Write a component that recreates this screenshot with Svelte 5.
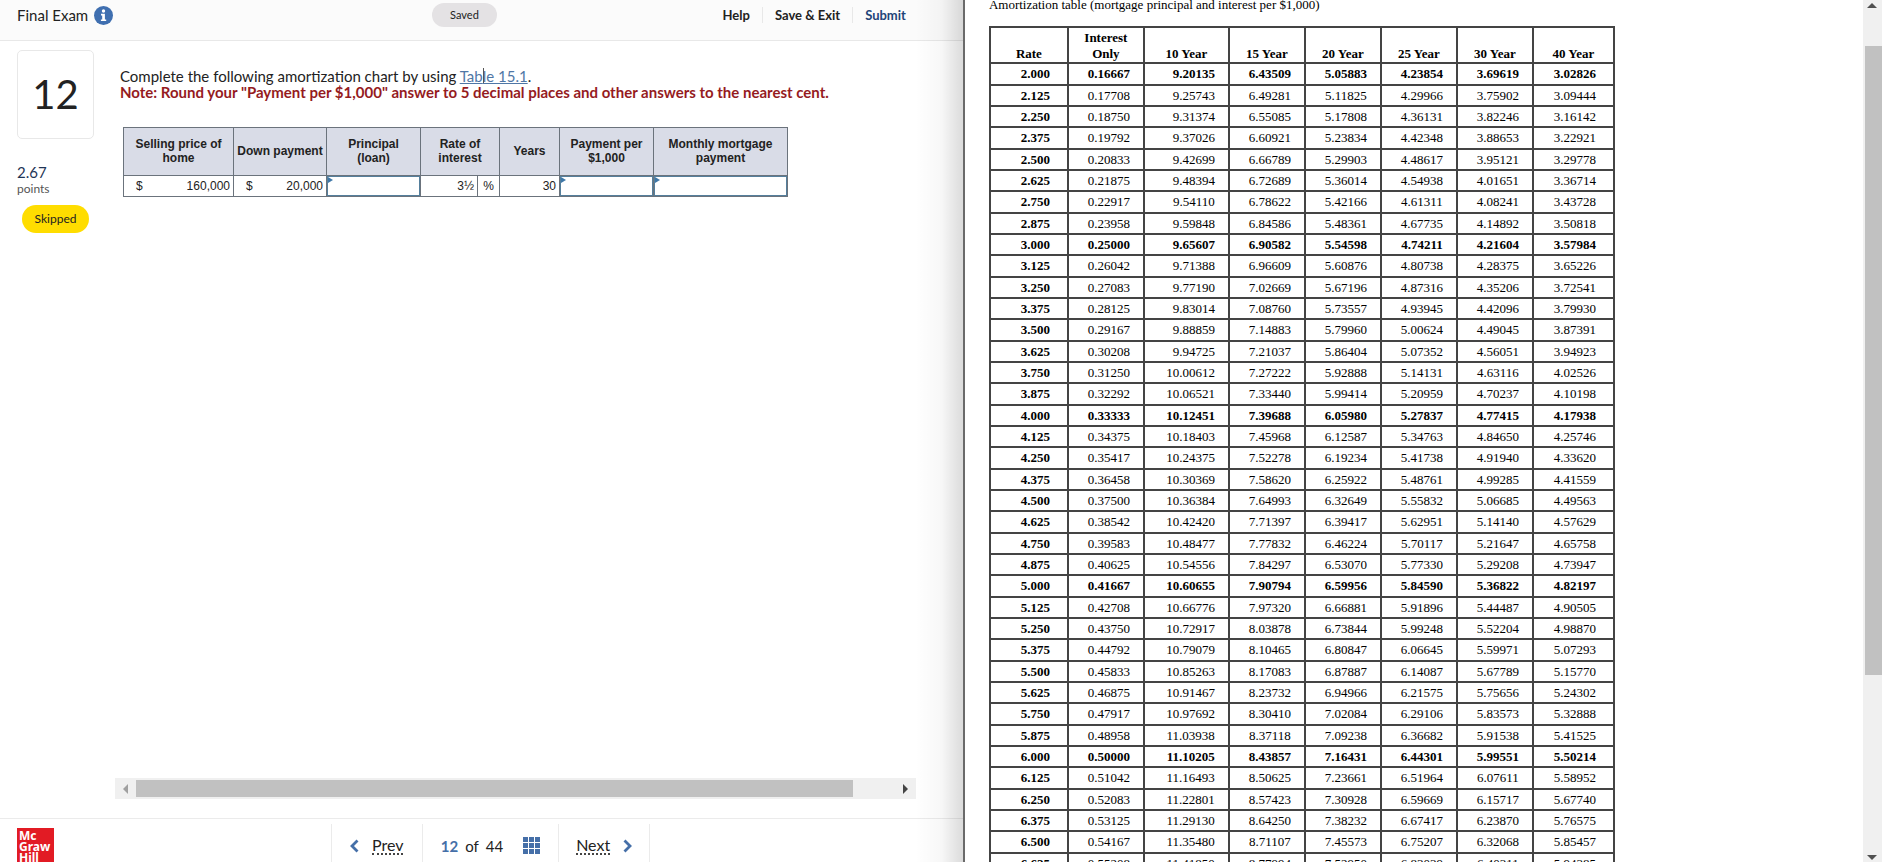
<script>
  const years = ['10 Year', '15 Year', '20 Year', '25 Year', '30 Year', '40 Year'];

  const rates = `2.000 0.16667 9.20135 6.43509 5.05883 4.23854 3.69619 3.02826
2.125 0.17708 9.25743 6.49281 5.11825 4.29966 3.75902 3.09444
2.250 0.18750 9.31374 6.55085 5.17808 4.36131 3.82246 3.16142
2.375 0.19792 9.37026 6.60921 5.23834 4.42348 3.88653 3.22921
2.500 0.20833 9.42699 6.66789 5.29903 4.48617 3.95121 3.29778
2.625 0.21875 9.48394 6.72689 5.36014 4.54938 4.01651 3.36714
2.750 0.22917 9.54110 6.78622 5.42166 4.61311 4.08241 3.43728
2.875 0.23958 9.59848 6.84586 5.48361 4.67735 4.14892 3.50818
3.000 0.25000 9.65607 6.90582 5.54598 4.74211 4.21604 3.57984
3.125 0.26042 9.71388 6.96609 5.60876 4.80738 4.28375 3.65226
3.250 0.27083 9.77190 7.02669 5.67196 4.87316 4.35206 3.72541
3.375 0.28125 9.83014 7.08760 5.73557 4.93945 4.42096 3.79930
3.500 0.29167 9.88859 7.14883 5.79960 5.00624 4.49045 3.87391
3.625 0.30208 9.94725 7.21037 5.86404 5.07352 4.56051 3.94923
3.750 0.31250 10.00612 7.27222 5.92888 5.14131 4.63116 4.02526
3.875 0.32292 10.06521 7.33440 5.99414 5.20959 4.70237 4.10198
4.000 0.33333 10.12451 7.39688 6.05980 5.27837 4.77415 4.17938
4.125 0.34375 10.18403 7.45968 6.12587 5.34763 4.84650 4.25746
4.250 0.35417 10.24375 7.52278 6.19234 5.41738 4.91940 4.33620
4.375 0.36458 10.30369 7.58620 6.25922 5.48761 4.99285 4.41559
4.500 0.37500 10.36384 7.64993 6.32649 5.55832 5.06685 4.49563
4.625 0.38542 10.42420 7.71397 6.39417 5.62951 5.14140 4.57629
4.750 0.39583 10.48477 7.77832 6.46224 5.70117 5.21647 4.65758
4.875 0.40625 10.54556 7.84297 6.53070 5.77330 5.29208 4.73947
5.000 0.41667 10.60655 7.90794 6.59956 5.84590 5.36822 4.82197
5.125 0.42708 10.66776 7.97320 6.66881 5.91896 5.44487 4.90505
5.250 0.43750 10.72917 8.03878 6.73844 5.99248 5.52204 4.98870
5.375 0.44792 10.79079 8.10465 6.80847 6.06645 5.59971 5.07293
5.500 0.45833 10.85263 8.17083 6.87887 6.14087 5.67789 5.15770
5.625 0.46875 10.91467 8.23732 6.94966 6.21575 5.75656 5.24302
5.750 0.47917 10.97692 8.30410 7.02084 6.29106 5.83573 5.32888
5.875 0.48958 11.03938 8.37118 7.09238 6.36682 5.91538 5.41525
6.000 0.50000 11.10205 8.43857 7.16431 6.44301 5.99551 5.50214
6.125 0.51042 11.16493 8.50625 7.23661 6.51964 6.07611 5.58952
6.250 0.52083 11.22801 8.57423 7.30928 6.59669 6.15717 5.67740
6.375 0.53125 11.29130 8.64250 7.38232 6.67417 6.23870 5.76575
6.500 0.54167 11.35480 8.71107 7.45573 6.75207 6.32068 5.85457
6.625 0.55208 11.41850 8.77994 7.52950 6.83039 6.40311 5.94385`
    .split('\n')
    .map((line) => line.split(' '));

  const cells = [0, 1, 2].flatMap((r) => [0, 1, 2].map((c) => ({ x: c * 6, y: r * 6 })));

  let principal = $state('');
  let perThousand = $state('');
  let monthly = $state('');
</script>

<div class="page">
  <main class="exam">
    <header class="top">
      <div class="title">
        <span>Final Exam</span>
        <button class="info" aria-label="Exam information">
          <svg viewBox="0 0 19 19" width="19" height="19" aria-hidden="true">
            <circle cx="9.500" cy="9.500" r="9.500" fill="#3f6fb0" />
            <circle cx="9.500" cy="5" r="1.700" fill="#fff" />
            <path d="M7 7.800h3.900v5.600h1.300v1.600H6.900v-1.600h1.300V9.400H7z" fill="#fff" />
          </svg>
        </button>
      </div>
      <span class="saved">Saved</span>
      <nav class="actions">
        <button>Help</button>
        <button>Save &amp; Exit</button>
        <button class="submit">Submit</button>
      </nav>
    </header>

    <div class="work">
      <aside class="side">
        <div class="number">12</div>
        <div class="score">2.67</div>
        <div class="points">points</div>
        <span class="skipped">Skipped</span>
      </aside>

      <section class="question">
        <div class="prompt">
          <p>Complete the following amortization chart by using <a href="#table">Tab<span class="caret"></span>le 15.1</a>.</p>
          <p class="note">Note: Round your "Payment per $1,000" answer to 5 decimal places and other answers to the nearest cent.</p>
        </div>

        <table class="chart">
          <colgroup>
            <col class="w-price" /><col class="w-down" /><col class="w-loan" /><col class="w-rate" />
            <col class="w-unit" /><col class="w-years" /><col class="w-loan" /><col class="w-month" />
          </colgroup>
          <thead>
            <tr>
              <th>Selling price of home</th>
              <th>Down payment</th>
              <th>Principal<br />(loan)</th>
              <th colspan="2">Rate of<br />interest</th>
              <th>Years</th>
              <th>Payment per $1,000</th>
              <th>Monthly mortgage payment</th>
            </tr>
          </thead>
          <tbody>
            <tr>
              <td><div class="money"><span>$</span><span>160,000</span></div></td>
              <td><div class="money"><span>$</span><span>20,000</span></div></td>
              <td class="entry"><input aria-label="Principal (loan)" bind:value={principal} /></td>
              <td class="num">3½</td>
              <td class="unit">%</td>
              <td class="num">30</td>
              <td class="entry"><input aria-label="Payment per $1,000" bind:value={perThousand} /></td>
              <td class="entry"><input aria-label="Monthly mortgage payment" bind:value={monthly} /></td>
            </tr>
          </tbody>
        </table>

        <div class="hbar">
          <button aria-label="Scroll left">
            <svg viewBox="0 0 5 10" width="5" height="10"><path d="M5 0v10L0 5z" fill="#a0a0a0" /></svg>
          </button>
          <div class="htrack"><div class="hthumb"></div></div>
          <button aria-label="Scroll right">
            <svg viewBox="0 0 5 10" width="5" height="10"><path d="M0 0v10l5-5z" fill="#444" /></svg>
          </button>
        </div>
      </section>
    </div>

    <footer class="bottom">
      <div class="logo"><span>Mc</span><span>Graw</span><span>Hill</span></div>
      <nav class="pager">
        <button class="step">
          <svg viewBox="0 0 9 14" width="9" height="14"><path d="M7.500 1.500L2 7l5.500 5.500" fill="none" stroke="#456fa8" stroke-width="2.800" /></svg>
          <span>Prev</span>
        </button>
        <div class="where">
          <b>12</b><span>of</span><span>44</span>
          <button aria-label="All questions">
            <svg viewBox="0 0 17 17" width="17" height="17">
              {#each cells as c}
                <rect x={c.x} y={c.y} width="5" height="5" fill="#456fa8" />
              {/each}
            </svg>
          </button>
        </div>
        <button class="step">
          <span>Next</span>
          <svg viewBox="0 0 9 14" width="9" height="14"><path d="M1.500 1.500L7 7l-5.500 5.500" fill="none" stroke="#456fa8" stroke-width="2.800" /></svg>
        </button>
      </nav>
    </footer>
    <div class="shade"></div>
  </main>

  <aside class="reference">
    <div class="sheet">
      <table class="rates" id="table">
        <caption>Amortization table (mortgage principal and interest per $1,000)</caption>
        <colgroup>
          <col class="c-rate" /><col class="c-std" /><col class="c-ten" /><col class="c-std" />
          <col class="c-std" /><col class="c-std" /><col class="c-std" /><col class="c-last" />
        </colgroup>
        <thead>
          <tr>
            <th>Rate</th>
            <th>Interest<br />Only</th>
            {#each years as y}<th>{y}</th>{/each}
          </tr>
        </thead>
        <tbody>
          {#each rates as row}
            <tr class:whole={row[0].endsWith('.000')}>
              {#each row as v}<td>{v}</td>{/each}
            </tr>
          {/each}
        </tbody>
      </table>
    </div>
    <div class="vbar">
      <button aria-label="Scroll up">
        <svg viewBox="0 0 10 5" width="10" height="5"><path d="M0 5h10L5 0z" fill="#505050" /></svg>
      </button>
      <div class="vtrack"><div class="vthumb"></div></div>
      <button aria-label="Scroll down">
        <svg viewBox="0 0 10 5" width="10" height="5"><path d="M0 0h10L5 5z" fill="#505050" /></svg>
      </button>
    </div>
  </aside>
</div>

<style>
  :global(body) { background: #fff; }
  * { box-sizing: border-box; }
  button {
    padding: 0;
    border: 0;
    background: none;
    font: inherit;
    color: inherit;
    cursor: pointer;
  }
  svg { display: block; }
  p { margin: 0; }

  .page {
    display: grid;
    grid-template-columns: minmax(0, 22fr) minmax(0, 21fr);
    height: 100vh;
    overflow: hidden;
  }

  .exam {
    position: relative;
    display: flex;
    flex-direction: column;
    min-height: 0;
    font-family: Lato, "Open Sans", sans-serif;
    font-size: 15px;
    color: #222;
  }
  .shade {
    position: absolute;
    inset: 0 0 0 auto;
    width: 48px;
    background: linear-gradient(to right, rgba(0, 0, 0, 0), rgba(0, 0, 0, 0.03) 55%, rgba(0, 0, 0, 0.14));
    pointer-events: none;
  }

  .top {
    display: grid;
    grid-template-columns: 1fr auto 1fr;
    align-items: center;
    height: 41px;
    padding: 0 57px 10px 17px;
    background: #fbfbfb;
    border-bottom: 1px solid #e8e8e8;
  }
  .title { display: flex; align-items: center; gap: 6px; }
  .saved {
    margin-left: 6px;
    padding: 0 18px;
    border-radius: 12px;
    background: #e4e2e4;
    font-size: 11px;
    line-height: 24px;
  }
  .actions {
    display: flex;
    justify-content: flex-end;
    font-size: 13px;
    font-weight: 700;
    line-height: 16px;
  }
  .actions button { padding: 0 12px; border-left: 1px solid #e8e8e8; }
  .actions button:first-child { border-left: 0; }
  .actions button:last-child { padding-right: 0; }
  .actions .submit { color: #1f4478; }

  .work { flex: 1; display: flex; min-height: 0; }
  .side { flex: none; width: 115px; padding: 9px 0 0 17px; }
  .number {
    width: 77px;
    border: 1px solid #e8e8e8;
    border-radius: 5px;
    font-size: 40px;
    line-height: 87px;
    text-align: center;
  }
  .score { margin-top: 23px; line-height: 20px; color: #1f3556; }
  .points { font-size: 12px; line-height: 14px; color: #555; }
  .skipped {
    display: block;
    width: 67px;
    margin: 9px 0 0 5px;
    border-radius: 14px;
    background: #ffdd00;
    font-size: 12px;
    line-height: 28px;
    text-align: center;
  }

  .question { flex: 1; display: flex; flex-direction: column; min-width: 0; padding: 27px 47px 19px 0; }
  .prompt { padding-left: 5px; line-height: 16px; }
  .prompt a { position: relative; color: #4f77a6; }
  .caret { position: absolute; width: 1px; height: 15px; background: #555; }
  .note { font-weight: 700; color: #951b1e; }

  .chart {
    width: 664px;
    margin: 27px 0 0 8px;
    border-collapse: collapse;
    table-layout: fixed;
    font: 12px/14px "Liberation Sans", Arial, sans-serif;
  }
  .w-price { width: 110px; }
  .w-down { width: 93px; }
  .w-loan { width: 94px; }
  .w-rate { width: 57px; }
  .w-unit { width: 22px; }
  .w-years { width: 60px; }
  .w-month { width: 134px; }
  .chart th, .chart td { border: 1px solid #6b737c; padding: 0 3px; }
  .chart th { height: 48px; padding: 0 0 2px; background: #d9dce7; }
  .chart th:first-child, .chart th:last-child { padding: 0 8px 2px; }
  .chart td { height: 21px; }
  .money { display: flex; justify-content: space-between; padding-left: 9px; }
  .num { text-align: right; }
  .unit { text-align: center; }
  .chart td.entry { position: relative; padding: 0; }
  .entry::before {
    content: "";
    position: absolute;
    left: 1px;
    top: 1px;
    border: solid transparent;
    border-width: 3px 0 3px 5px;
    border-left-color: #3f78a8;
  }
  .entry input {
    display: block;
    width: 100%;
    height: 20px;
    padding: 0 3px;
    border: 1px solid #557f9c;
    background: none;
    font: inherit;
    text-align: right;
  }

  .hbar { display: flex; height: 21px; margin-top: auto; background: #f0f0f0; }
  .hbar button { display: grid; place-items: center; width: 21px; }
  .htrack { flex: 1; display: flex; padding: 2px 0; }
  .htrack::after { content: ""; flex: 1; }
  .hthumb { flex: 17; height: 17px; background: #c1c1c1; }

  .bottom {
    flex: none;
    position: relative;
    display: flex;
    justify-content: center;
    height: 44px;
    padding: 5px 0 0 18px;
    border-top: 1px solid #ebebeb;
    overflow: hidden;
  }
  .logo {
    position: absolute;
    left: 17px;
    top: 9px;
    display: flex;
    flex-direction: column;
    width: 37px;
    height: 37px;
    padding: 2px;
    background: #e21b24;
    color: #fff;
    font: 700 12px/11px "Noto Sans", sans-serif;
  }
  .pager {
    display: flex;
    border-left: 1px solid #ebebeb;
    border-right: 1px solid #ebebeb;
    font-size: 16px;
  }
  .pager > * { display: flex; align-items: center; height: 43px; }
  .step { justify-content: center; gap: 13px; width: 90px; }
  .step span { border-bottom: 2px dotted #444; line-height: 16px; }
  .where {
    gap: 7px;
    padding: 0 18px;
    border-left: 1px solid #ebebeb;
    border-right: 1px solid #ebebeb;
    font-size: 15px;
  }
  .where b { color: #456fa8; }
  .where button { margin-left: 13px; }

  .reference {
    display: flex;
    min-width: 0;
    min-height: 0;
    border-left: 2px solid #6a6a6a;
    font-family: "Liberation Serif", "Times New Roman", serif;
    color: #000;
  }
  .sheet { flex: 1; overflow: hidden; padding-left: 24px; }
  .rates {
    width: 624px;
    margin-top: -3px;
    border-collapse: collapse;
    table-layout: fixed;
    font-size: 13px;
    line-height: 16px;
  }
  .rates caption { padding-bottom: 13px; text-align: left; }
  .c-rate { width: 78px; }
  .c-std { width: 76px; }
  .c-ten { width: 85px; }
  .c-last { width: 81px; }
  .rates th, .rates td { border: 2px solid #444; }
  .rates th { height: 36px; padding: 0; vertical-align: bottom; }
  .rates td { height: 21px; padding: 0 13px 0 0; text-align: right; }
  .rates tr:nth-child(3n + 1) td { height: 22px; }
  .rates td:first-child { padding-right: 17px; font-weight: 700; }
  .rates td:last-child { padding-right: 17px; }
  .whole { font-weight: 700; }

  .vbar { display: flex; flex-direction: column; flex: none; width: 19px; background: #f0f0f0; }
  .vbar button { display: grid; place-items: center; height: 10px; }
  .vtrack { flex: 1; padding: 36px 0 0 2px; }
  .vthumb { height: 78%; background: #c1c1c1; }
</style>
